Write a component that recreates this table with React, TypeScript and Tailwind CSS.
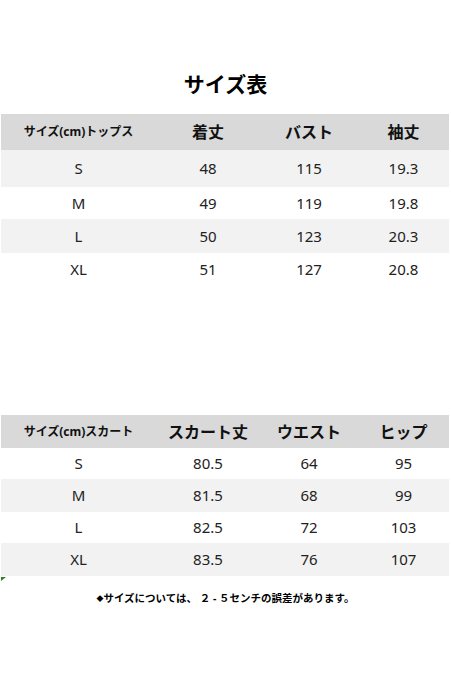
import React from "react";

type Row = string[];

const tops: Row[] = [
  ["S", "48", "115", "19.3"],
  ["M", "49", "119", "19.8"],
  ["L", "50", "123", "20.3"],
  ["XL", "51", "127", "20.8"],
];

const skirts: Row[] = [
  ["S", "80.5", "64", "95"],
  ["M", "81.5", "68", "99"],
  ["L", "82.5", "72", "103"],
  ["XL", "83.5", "76", "107"],
];

const cols = "grid grid-cols-[155px_104px_98px_1fr]";

const SizeTable: React.FC<{
  label: string;
  headers: string[];
  rows: Row[];
  headerH: string;
  rowH: string[];
  shadeOdd: boolean;
}> = ({ label, headers, rows, headerH, rowH, shadeOdd }) => {
  return (
    <div className="mx-[1px] w-[448px]">
      <div className={`${cols} ${headerH} items-center bg-[#d9d9d9] text-[#111]`}>
        <div className="text-center text-[12px] font-bold">{label}</div>
        {headers.map((h) => (
          <div key={h} className="text-center text-[16px] font-bold">
            {h}
          </div>
        ))}
      </div>
      {rows.map((r, i) => {
        const shaded = shadeOdd ? i % 2 === 0 : i % 2 === 1;
        return (
          <div
            key={r[0]}
            className={`${cols} ${rowH[i]} items-center text-[15px] text-[#222] ${
              shaded ? "bg-[#f2f2f2]" : "bg-white"
            }`}
          >
            {r.map((c, j) => (
              <div key={j} className="text-center">
                {c}
              </div>
            ))}
          </div>
        );
      })}
    </div>
  );
};

export default function App() {
  return (
    <div
      className="flex h-[677px] w-[451px] flex-col bg-white"
      style={{ fontFamily: '"Noto Sans", "Noto Sans CJK JP", sans-serif' }}
    >
      <h1 className="mt-[70px] text-center text-[21px] font-bold leading-[28px] text-black">
        サイズ表
      </h1>

      <div className="mt-[16px]">
        <SizeTable
          label="サイズ(cm)トップス"
          headers={["着丈", "バスト", "袖丈"]}
          rows={tops}
          headerH="h-[36px]"
          rowH={["h-[37px]", "h-[32px]", "h-[34px]", "h-[33px]"]}
          shadeOdd={true}
        />
      </div>

      <div className="mt-[129px]">
        <SizeTable
          label="サイズ(cm)スカート"
          headers={["スカート丈", "ウエスト", "ヒップ"]}
          rows={skirts}
          headerH="h-[33px]"
          rowH={["h-[31px]", "h-[33px]", "h-[31px]", "h-[33px]"]}
          shadeOdd={false}
        />
      </div>

      <div className="relative">
        <svg className="absolute left-[1px] top-[1px]" width="5" height="4" viewBox="0 0 5 4">
          <polygon points="0,0 5,0 0,4" fill="#2e7d32" />
        </svg>
      </div>

      <p className="mt-[15px] text-center text-[10.5px] font-bold leading-[14px] text-black">
        <span className="text-[7px] align-middle">◆</span>サイズについては、 ２ - ５センチの誤差があります。
      </p>
    </div>
  );
}
